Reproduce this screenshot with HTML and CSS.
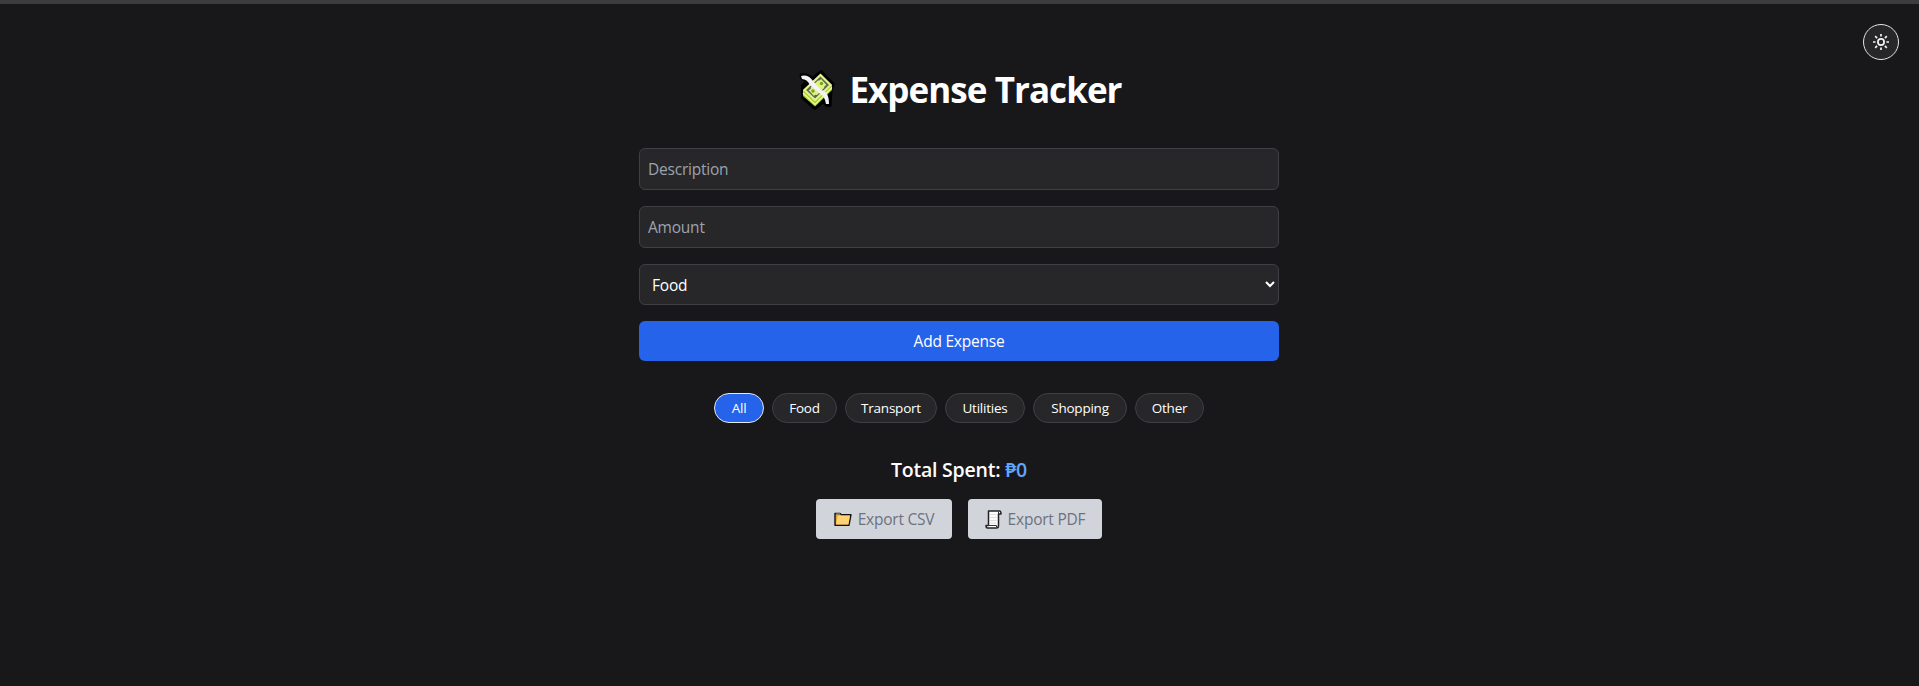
FILE: index.html
```html
<!DOCTYPE html>
<html lang="en">
<head>
<meta charset="utf-8">
<title>Expense Tracker</title>
<link rel="stylesheet" href="styles.css">
</head>
<body>
<div class="topbar"></div>
<button class="theme-toggle" aria-label="Toggle theme">
  <svg width="18" height="18" viewBox="0 0 18 18" fill="none" stroke="#f4f4f5" stroke-width="1.7">
    <circle cx="9" cy="9" r="3.1"/>
    <path d="M9 1v2.6M9 14.400V17M1 9h2.600M14.400 9H17M3.200 3.200l1.900 1.900M12.900 12.900l1.900 1.900M3.200 14.800l1.900-1.900M12.900 5.100l1.900-1.900"/>
  </svg>
</button>
<main class="app">
  <h1 class="title">
    <svg class="money" width="36" height="40" viewBox="0 0 36 40">
      <path d="M1.500 4.500Q9 3 13 8L22 1 34.500 14 32.500 21 31.500 36H27.500L24.500 32 16 39 3 28V15L7 12 2 8Z" fill="#000" stroke="#000" stroke-width="2" stroke-linejoin="round"/>
      <path d="M4 20L21.500 4 33 15V20L16 36.500 4 26Z" fill="#a9cf36"/>
      <path d="M4 23L16 34.500 33 17.500" fill="none" stroke="#f0ffa0" stroke-width="1.200"/>
      <path d="M4 20L21.500 3.500 33 15 16 31.500Z" fill="#e2f58b"/>
      <path d="M7 20L21.500 6.500 30 15 16 28.500Z" fill="#626754"/>
      <path d="M9.500 20Q12 20 12 17L19 10.500Q21 11 22 9L27.500 15Q25 15.500 25 18L18 25Q16 24 15 26Z" fill="#dff184"/>
      <circle cx="14" cy="21" r="1.700" fill="#71a91c"/><circle cx="22.500" cy="13.500" r="1.700" fill="#71a91c"/>
      <path d="M2 6Q9 4 14 11L22 20Q30 21 30 34H27Q26 26 20 23L11 15Q8 9 3 9Z" fill="#f3f2f7"/>
    </svg>
    <span class="title-text">Expense Tracker</span>
  </h1>
  <form class="form">
    <input class="field" type="text" placeholder="Description">
    <input class="field" type="text" placeholder="Amount">
    <select class="field select"><option>Food</option></select>
    <button class="add" type="button">Add Expense</button>
  </form>
  <div class="filters">
    <button class="pill active w-all">All</button>
    <button class="pill w-food">Food</button>
    <button class="pill w-transport">Transport</button>
    <button class="pill w-utilities">Utilities</button>
    <button class="pill w-shopping">Shopping</button>
    <button class="pill w-other">Other</button>
  </div>
  <div class="total">Total Spent: <span class="amount">₱0</span></div>
  <div class="exports">
    <button class="export csv" disabled>
      <svg width="18" height="15" viewBox="0 0 18 15"><path d="M1 1.500H6L7.500 2.700H17L15 13.200H1Z" fill="#e6a72f" stroke="#111" stroke-width="1.400" stroke-linejoin="round"/><path d="M3.700 3.600H16L14.400 12.500H2Z" fill="#ffd272"/><path d="M2 1.600h4" stroke="#2d78a8" stroke-width="1.300"/></svg>
      <span>Export CSV</span>
    </button>
    <button class="export pdf" disabled>
      <svg width="17" height="19" viewBox="0 0 17 19"><path d="M3.500 1H14.500Q16 1 16 4H13.500V15.500Q13.500 18 11.500 18H2.500Q1 18 1 15.500H3.500Z" fill="#fcfcfc" stroke="#222226" stroke-width="1.500" stroke-linejoin="round"/><path d="M3 15.500H11.500V17M13.500 4V2" fill="none" stroke="#333338"/><path d="M5 4.500h6.500M5 7.500h6.500M5 10.500h6.500M5 13h6.500" stroke="#dedee2"/></svg>
      <span>Export PDF</span>
    </button>
  </div>
</main>
</body>
</html>
```
FILE: styles.css
```css
* { box-sizing: border-box; }
body {
  margin: 0;
  height: 686px;
  overflow: hidden;
  background: #18181a;
  color: #fff;
  font-family: "Open Sans", "Noto Sans", sans-serif;
  font-size: 15.5px;
  letter-spacing: -0.22px;
}
button, input, select { font: inherit; letter-spacing: inherit; color: inherit; margin: 0; }
.topbar { height: 4px; background: #3c3c3c; }
.theme-toggle {
  position: absolute;
  top: 24px;
  right: 20px;
  width: 36px;
  height: 36px;
  padding: 0;
  display: flex;
  align-items: center;
  justify-content: center;
  border: 1px solid #e4e4e7;
  border-radius: 50%;
  background: #27272a;
}
.app {
  width: 640px;
  margin: 0 auto;
  padding-top: 64px;
  display: flex;
  flex-direction: column;
  position: relative;
  left: -0.5px;
}
.title {
  margin: 0;
  height: 44px;
  display: flex;
  align-items: center;
  justify-content: center;
  gap: 14px;
  padding-left: 3px;
  font-size: 35px;
  font-weight: 700;
  line-height: 44px;
  letter-spacing: -0.95px;
}
.title-text { white-space: nowrap; }
.form { margin-top: 36px; display: flex; flex-direction: column; gap: 16px; }
.field {
  width: 100%;
  height: 42px;
  padding: 0 8px;
  border: 1px solid #3f3f46;
  border-radius: 6px;
  background: #27272a;
  outline: none;
}
.field::placeholder { color: #9ca3af; opacity: 1; }
.select { height: 41px; }
.add {
  height: 40px;
  padding: 0;
  border: 0;
  border-radius: 6px;
  background: #2563eb;
}
.filters { margin-top: 32px; display: flex; justify-content: center; gap: 8px; }
.pill {
  height: 30px;
  padding: 0;
  border: 1px solid #3f3f46;
  border-radius: 15px;
  background: #27272a;
  font-size: 13.5px;
}
.active { background: #2563eb; border-color: #e5e7eb; }
.w-all { width: 50px; }
.w-food { width: 65px; }
.w-transport { width: 92px; }
.w-utilities { width: 80px; }
.w-shopping { width: 94px; }
.w-other { width: 69px; }
.total {
  margin-top: 32px;
  height: 28px;
  line-height: 30px;
  font-size: 19.5px;
  font-weight: 600;
  text-align: center;
}
.amount { color: #60a5fa; }
.exports { margin-top: 16px; display: flex; justify-content: center; gap: 16px; }
.export {
  height: 40px;
  padding: 0;
  display: flex;
  align-items: center;
  justify-content: center;
  gap: 6px;
  border: 0;
  border-radius: 4px;
  background: #d1d5db;
  color: #6b7280;
}
.csv { width: 136px; }
.pdf { width: 134px; }
```
